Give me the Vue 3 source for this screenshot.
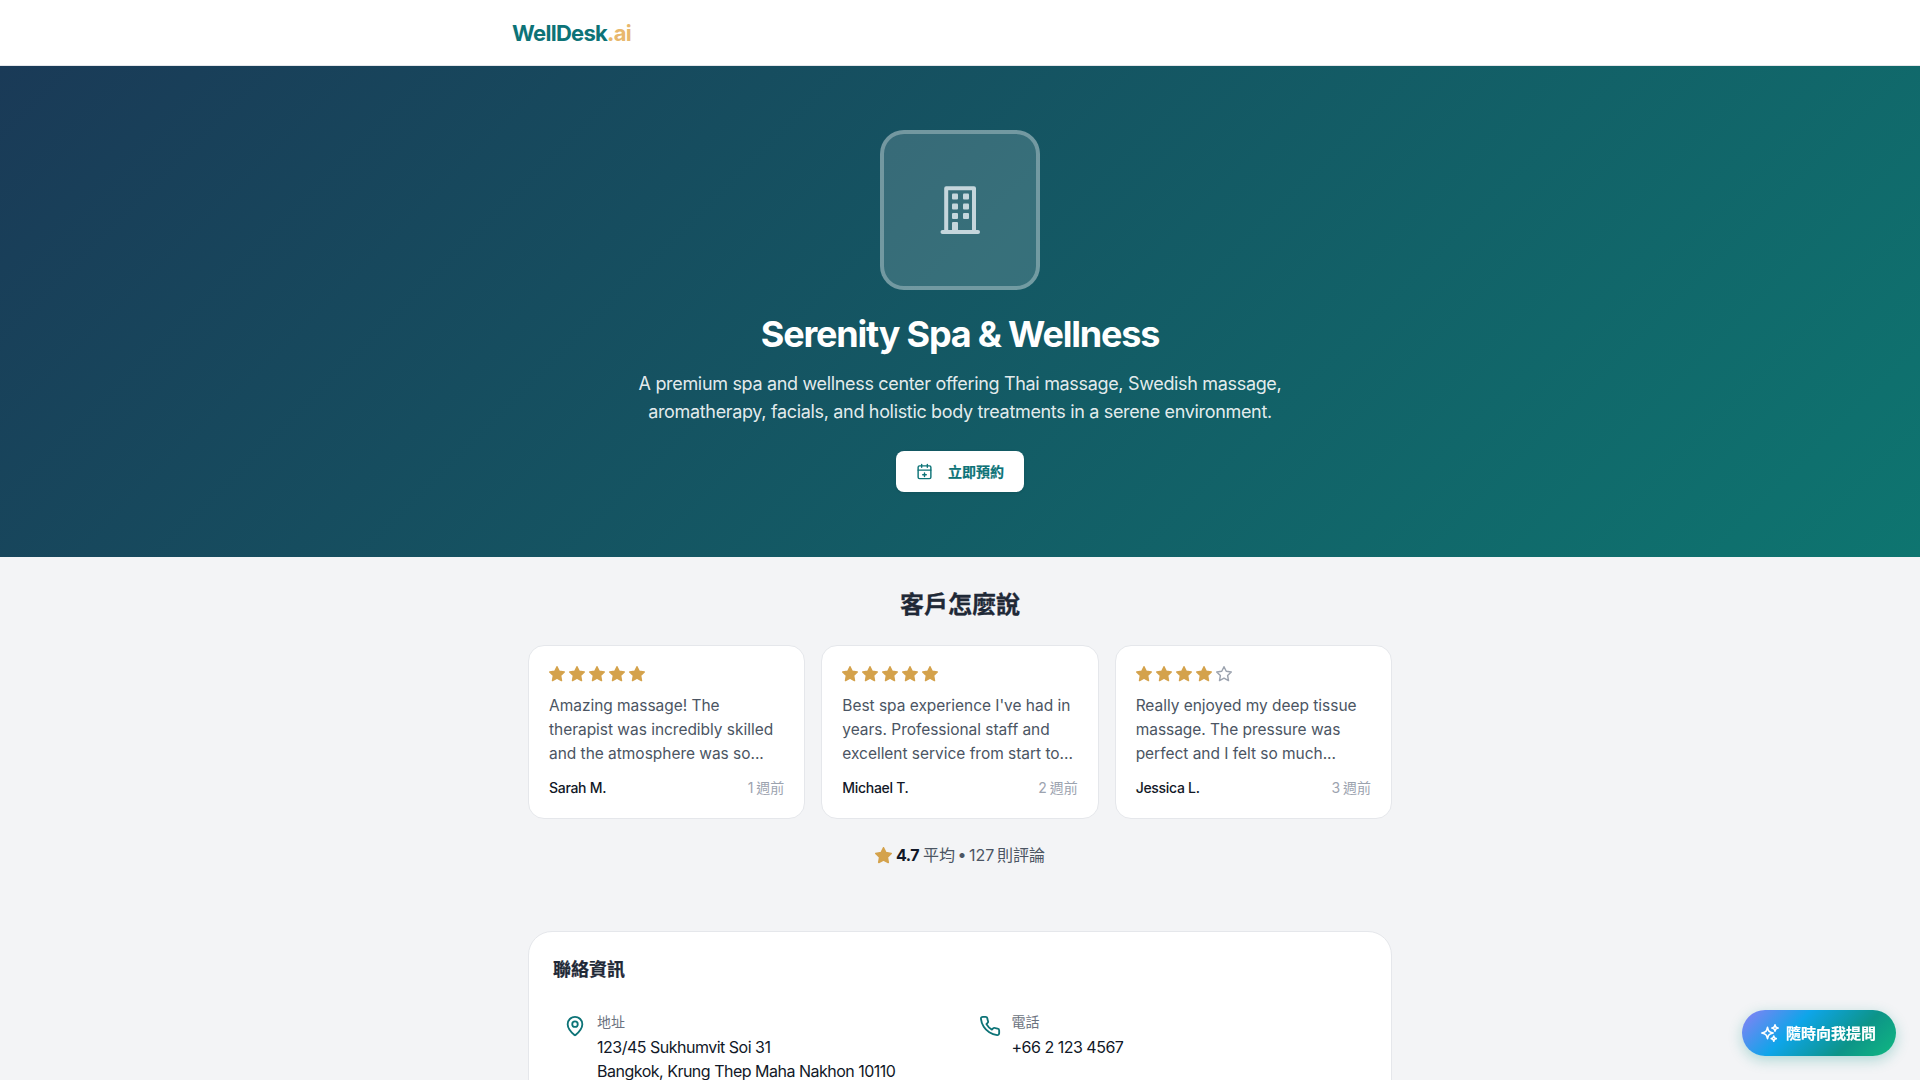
<script setup>
const star = '12 2 15.09 8.26 22 9.27 17 14.14 18.18 21.02 12 17.77 5.82 21.02 7 14.14 2 9.27 8.91 8.26 12 2'
const reviews = [
  { stars: 5, text: 'Amazing massage! The therapist was incredibly skilled and the atmosphere was so...', author: 'Sarah M.', when: '1 週前' },
  { stars: 5, text: "Best spa experience I've had in years. Professional staff and excellent service from start to...", author: 'Michael T.', when: '2 週前' },
  { stars: 4, text: 'Really enjoyed my deep tissue massage. The pressure was perfect and I felt so much...', author: 'Jessica L.', when: '3 週前' }
]
</script>

<template>
  <div class="page">
    <header class="topbar">
      <div class="topbar-inner">
        <span class="logo">WellDesk<span class="logo-ai">.ai</span></span>
      </div>
    </header>

    <section class="hero">
      <div class="hero-icon">
        <svg width="48" height="48" viewBox="0 0 48 48" fill="none">
          <path d="M10.2 44V2.2H38V44" stroke="#c5d6dc" stroke-width="4" stroke-linejoin="round" />
          <path d="M6.5 46H42" stroke="#c5d6dc" stroke-width="4" stroke-linecap="round" />
          <g fill="#c5d6dc">
            <rect x="16" y="7.5" width="6" height="6" rx="1" />
            <rect x="27" y="7.5" width="6" height="6" rx="1" />
            <rect x="16" y="17.5" width="6" height="6" rx="1" />
            <rect x="27" y="17.5" width="6" height="6" rx="1" />
            <rect x="16" y="27" width="6" height="6" rx="1" />
            <rect x="27" y="27" width="6" height="6" rx="1" />
            <path d="M16 37a1 1 0 0 1 1-1h4a1 1 0 0 1 1 1v8h-6z" />
          </g>
        </svg>
      </div>
      <h1 class="hero-title">Serenity Spa &amp; Wellness</h1>
      <p class="hero-text">A premium spa and wellness center offering Thai massage, Swedish massage, aromatherapy, facials, and holistic body treatments in a serene environment.</p>
      <button class="book-btn">
        <svg width="17" height="17" viewBox="0 0 24 24" fill="none" stroke="currentColor" stroke-width="2" stroke-linecap="round" stroke-linejoin="round">
          <rect x="3" y="4" width="18" height="18" rx="2" />
          <path d="M8 2v4M16 2v4M3 10h18M12 14v5M9.5 16.5h5" />
        </svg>
        <span>立即預約</span>
      </button>
    </section>

    <main class="content">
      <h2 class="section-title">客戶怎麼說</h2>
      <div class="reviews">
        <article v-for="r in reviews" :key="r.author" class="review">
          <div class="stars">
            <svg v-for="n in 5" :key="n" width="16" height="16" viewBox="1 1 22 22" :class="n <= r.stars ? 'star-on' : 'star-off'" stroke-width="2" stroke-linejoin="round">
              <polygon :points="star" />
            </svg>
          </div>
          <p class="review-text">{{ r.text }}</p>
          <div class="review-foot">
            <span class="author">{{ r.author }}</span>
            <span class="when">{{ r.when }}</span>
          </div>
        </article>
      </div>
      <div class="summary">
        <svg width="17" height="17" viewBox="1 1 22 22" class="star-on" stroke-width="2" stroke-linejoin="round">
          <polygon :points="star" />
        </svg>
        <strong>4.7</strong>
        <span class="summary-text">平均 • 127 則評論</span>
      </div>

      <section class="contact">
        <h3 class="contact-title">聯絡資訊</h3>
        <div class="contact-grid">
          <div class="contact-item">
            <svg class="contact-icon" width="22" height="22" viewBox="0 0 24 24" fill="none" stroke="currentColor" stroke-width="2" stroke-linecap="round" stroke-linejoin="round">
              <path d="M20 10c0 4.993-5.539 10.193-7.399 11.799a1 1 0 0 1-1.202 0C9.539 20.193 4 14.993 4 10a8 8 0 0 1 16 0" />
              <circle cx="12" cy="10" r="3" />
            </svg>
            <div>
              <div class="contact-label">地址</div>
              <div class="contact-value">123/45 Sukhumvit Soi 31</div>
              <div class="contact-value">Bangkok, Krung Thep Maha Nakhon 10110</div>
            </div>
          </div>
          <div class="contact-item">
            <svg class="contact-icon" width="22" height="22" viewBox="0 0 24 24" fill="none" stroke="currentColor" stroke-width="2" stroke-linecap="round" stroke-linejoin="round">
              <path d="M22 16.92v3a2 2 0 0 1-2.18 2 19.79 19.79 0 0 1-8.63-3.07 19.5 19.5 0 0 1-6-6 19.79 19.79 0 0 1-3.07-8.67A2 2 0 0 1 4.11 2h3a2 2 0 0 1 2 1.72 12.84 12.84 0 0 0 .7 2.81 2 2 0 0 1-.45 2.11L8.09 9.91a16 16 0 0 0 6 6l1.27-1.27a2 2 0 0 1 2.11-.45 12.84 12.84 0 0 0 2.81.7A2 2 0 0 1 22 16.92z" />
            </svg>
            <div>
              <div class="contact-label">電話</div>
              <div class="contact-value">+66 2 123 4567</div>
            </div>
          </div>
        </div>
      </section>
    </main>

    <button class="ask-btn">
      <svg width="20" height="20" viewBox="0 0 24 24" fill="none" stroke="currentColor" stroke-width="2" stroke-linecap="round" stroke-linejoin="round">
        <path d="M9.813 15.904 9 18.75l-.813-2.846a4.5 4.5 0 0 0-3.09-3.09L2.25 12l2.846-.813a4.5 4.5 0 0 0 3.09-3.09L9 5.25l.813 2.846a4.5 4.5 0 0 0 3.09 3.09L15.75 12l-2.846.813a4.5 4.5 0 0 0-3.09 3.09ZM18.259 8.715 18 9.75l-.259-1.035a3.375 3.375 0 0 0-2.455-2.456L14.25 6l1.036-.259a3.375 3.375 0 0 0 2.455-2.456L18 2.25l.259 1.035a3.375 3.375 0 0 0 2.456 2.456L21.75 6l-1.035.259a3.375 3.375 0 0 0-2.456 2.456ZM16.894 20.567 16.5 21.75l-.394-1.183a2.25 2.25 0 0 0-1.423-1.423L13.5 18.75l1.183-.394a2.25 2.25 0 0 0 1.423-1.423l.394-1.183.394 1.183a2.25 2.25 0 0 0 1.423 1.423l1.183.394-1.183.394a2.25 2.25 0 0 0-1.423 1.423Z" />
      </svg>
      <span>隨時向我提問</span>
    </button>
  </div>
</template>

<style scoped>
.page {
  height: 100vh;
  overflow: hidden;
  background: #f3f4f6;
  font-family: Inter, "Noto Sans CJK TC", sans-serif;
  color: #111827;
}
.topbar {
  height: 65px;
  background: #fff;
  border-bottom: 1px solid #e5e7eb;
}
.topbar-inner {
  width: 896px;
  height: 100%;
  margin: 0 auto;
  display: flex;
  align-items: center;
}
.logo {
  font-size: 22px;
  font-weight: 700;
  color: #0d7377;
  letter-spacing: -0.72px;
}
.logo-ai { color: #e8b86d; }
.hero {
  background: linear-gradient(135deg, #1a3a57 0%, #0e7570 100%);
  padding: 64px 0 65px;
  display: flex;
  flex-direction: column;
  align-items: center;
  color: #fff;
}
.hero-icon {
  box-sizing: border-box;
  width: 160px;
  height: 160px;
  border: 4px solid rgba(255, 255, 255, 0.3);
  border-radius: 24px;
  background: rgba(255, 255, 255, 0.15);
  display: flex;
  align-items: center;
  justify-content: center;
}
.hero-title {
  margin: 24px 0 16px;
  font-size: 36px;
  line-height: 40px;
  font-weight: 700;
  letter-spacing: -1.2px;
}
.hero-text {
  margin: 0 0 25px;
  width: 672px;
  text-align: center;
  font-size: 18px;
  line-height: 28px;
  color: rgba(255, 255, 255, 0.9);
  letter-spacing: -0.33px;
}
.book-btn {
  width: 128px;
  height: 41px;
  padding: 0;
  border: 0;
  border-radius: 8px;
  background: #fff;
  color: #0d7377;
  font: 700 14px Inter, "Noto Sans CJK TC", sans-serif;
  display: flex;
  align-items: center;
  justify-content: center;
  gap: 15px;
  box-shadow: 0 1px 3px rgba(0, 0, 0, 0.1);
}
.book-btn span,
.ask-btn span {
  margin-bottom: 2px;
  -webkit-text-stroke: 0.2px currentColor;
}
.content {
  width: 864px;
  margin: 0 auto;
  padding-top: 32px;
}
.section-title {
  margin: 0 0 24px;
  text-align: center;
  font-size: 24px;
  line-height: 32px;
  font-weight: 700;
  color: #1f2937;
  -webkit-text-stroke: 0.3px currentColor;
}
.reviews {
  display: grid;
  grid-template-columns: repeat(3, 1fr);
  gap: 16px;
}
.review {
  background: #fff;
  border: 1px solid #e5e7eb;
  border-radius: 16px;
  padding: 20px;
}
.stars {
  display: flex;
  gap: 4px;
  margin-bottom: 12px;
}
.stars svg { display: block; }
.star-on { fill: #d4a24c; stroke: #d4a24c; }
.star-off { fill: none; stroke: #9ca3af; }
.review-text {
  margin: 0 0 12px;
  font-size: 15.5px;
  line-height: 24px;
  color: #4b5563;
  letter-spacing: -0.03px;
}
.review-foot {
  display: flex;
  justify-content: space-between;
  align-items: center;
  font-size: 14px;
  line-height: 20px;
}
.author { color: #111827; font-weight: 500; letter-spacing: -0.3px; }
.when { color: #9ca3af; word-spacing: -1px; }
.summary {
  margin-top: 24px;
  display: flex;
  justify-content: center;
  align-items: center;
  gap: 4px;
  font-size: 16px;
  line-height: 24px;
  color: #4b5563;
}
.summary strong { color: #111827; font-weight: 700; letter-spacing: -0.5px; }
.summary-text { word-spacing: -2px; }
.contact {
  margin-top: 64px;
  padding: 24px;
  background: #fff;
  border: 1px solid #e5e7eb;
  border-radius: 24px;
}
.contact-title {
  margin: 0 0 16px;
  font-size: 18px;
  line-height: 28px;
  font-weight: 700;
  color: #1f2937;
  -webkit-text-stroke: 0.25px currentColor;
}
.contact-grid {
  display: grid;
  grid-template-columns: 1fr 1fr;
  column-gap: 15px;
}
.contact-item {
  display: flex;
  gap: 11px;
  padding: 12px 12px 12px 11px;
}
.contact-icon {
  flex: none;
  margin-top: 3px;
  color: #0d7377;
}
.contact-label {
  font-size: 14px;
  line-height: 20px;
  color: #6b7280;
  margin-bottom: 3px;
}
.contact-value {
  font-size: 16px;
  line-height: 24px;
  color: #111827;
  letter-spacing: -0.5px;
}
.ask-btn {
  position: fixed;
  right: 24px;
  bottom: 24px;
  height: 46px;
  padding: 0 20px 0 18px;
  border: 0;
  border-radius: 23px;
  background: linear-gradient(135deg, #8b7ff5 0%, #0ea5e9 35%, #0d9488 70%, #10b981 100%);
  color: #fff;
  font: 700 15px Inter, "Noto Sans CJK TC", sans-serif;
  display: flex;
  align-items: center;
  gap: 6px;
  box-shadow: 0 4px 14px rgba(13, 148, 136, 0.3);
}
</style>
